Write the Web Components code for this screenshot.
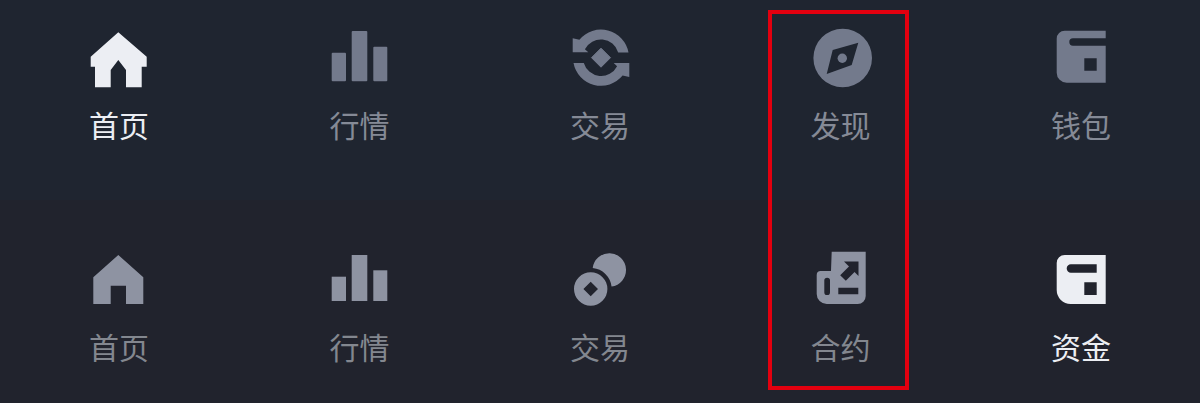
<!DOCTYPE html>
<html lang="zh">
<head>
<meta charset="utf-8">
<title>Tab bars</title>
<style>
  html, body { margin: 0; padding: 0; background: #21232d; }
</style>
</head>
<body>
<compare-sheet>
  <tab-bar variant="top">
    <tab-item active icon="home" style="--nudge:-2px">首页</tab-item>
    <tab-item icon="bars" style="--nudge:-1px">行情</tab-item>
    <tab-item icon="swap">交易</tab-item>
    <tab-item icon="compass" style="--nudge:1px">发现</tab-item>
    <tab-item icon="wallet" style="--nudge:2px">钱包</tab-item>
  </tab-bar>
  <tab-bar variant="bottom">
    <tab-item icon="home2" style="--nudge:-2px">首页</tab-item>
    <tab-item icon="bars2" style="--nudge:-1px">行情</tab-item>
    <tab-item icon="coins">交易</tab-item>
    <tab-item icon="contract" style="--nudge:1px">合约</tab-item>
    <tab-item active icon="funds" style="--nudge:2px">资金</tab-item>
  </tab-bar>
</compare-sheet>

<script>
const SWAP_ARC = 'M58.5 24.4A28 28 0 0 0 9.4 11.8L2.7 10.3V24.3H18.3L14.9 21.2A18 18 0 0 1 48.2 24.4Z';

const ICONS = {
  home: `<path d="M28.3 4.3 56.7 28.7V38.7H51.7V59.3H36V42L28.3 32 20.7 42V59.3H5V38.7H.7V28.7Z"/>`,
  bars: `<rect x="1.7" y="24.7" width="14.3" height="28.6" rx="1"/><rect x="21.7" y="3" width="15.6" height="50.3" rx="1"/><rect x="43.3" y="18.7" width="14" height="34.6" rx="1"/>`,
  swap: `<path d="${SWAP_ARC}"/>
         <path d="${SWAP_ARC}" transform="rotate(180 31 29.7)"/>
         <path d="M31 20.2 40.5 29.7 31 39.2 21.5 29.7Z" stroke="currentColor" stroke-width="1" stroke-linejoin="round"/>`,
  compass: `<path fill-rule="evenodd" d="M32.7.7A29.3 29.3 0 1 1 32.7 59.3 29.3 29.3 0 1 1 32.7.7ZM48.3 14.7 22.7 22 16.7 46 41.7 37Z"/><circle cx="32.3" cy="30.3" r="4.7"/>`,
  wallet: `<path fill-rule="evenodd" d="M14.7 2.7H55.7V10.3H23A3.7 3.7 0 0 0 23 17.7H55.7V54.7H16.7A10 10 0 0 1 6.7 44.7V10.7A8 8 0 0 1 14.7 2.7ZM34.3 30.3V42.7H46.7V30.3Z"/>`,
  home2: `<path fill-rule="evenodd" d="M28.3 5 53.3 27.3V54H36V35.7H20.7V54H3.3V27.3Z"/>`,
  bars2: `<rect x="1.7" y="26.7" width="14.3" height="24.3"/><rect x="21.7" y="5" width="15.6" height="46"/><rect x="43.3" y="20.3" width="14" height="30.7"/>`,
  coins: `<path d="M22.72 18.12A16.7 16.7 0 1 1 41.54 36.54 21 21 0 0 0 22.72 18.12Z"/>
          <path fill-rule="evenodd" d="M20.7 22.3A16.7 16.7 0 1 1 20.7 55.7 16.7 16.7 0 1 1 20.7 22.3ZM20.7 31.7 13.4 39 20.7 46.3 28 39Z"/>`,
  contract: `<path fill-rule="evenodd" d="M21.7 1.7H55.7V46A8 8 0 0 1 47.7 54H16.7A10 10 0 0 1 6.7 44V25A4 4 0 0 1 10.7 21H21ZM14.3 30.5V42.2A2.85 2.85 0 0 0 20 42.2V30.5A2.85 2.85 0 0 0 14.3 30.5ZM28.3 37.7V44.3H48.3V37.7Z"/>
             <path d="M33 28 43 18" fill="none" stroke="var(--cut)" stroke-width="8"/><path d="M34 11.5H48.5V26Z" fill="var(--cut)"/>`,
  funds: `<path fill-rule="evenodd" d="M14.7 5H55.7V54H20.7A14 14 0 0 1 6.7 40V13A8 8 0 0 1 14.7 5ZM20.9 14.3A4.2 4.2 0 0 0 20.9 22.7H46.7V14.3ZM34.3 32.3V45H46.7V32.3Z"/>`
};

class CompareSheet extends HTMLElement {
  constructor() {
    super();
    this.attachShadow({mode: 'open'}).innerHTML = `
      <style>
        :host { display: block; position: relative; width: 1200px; height: 403px; overflow: hidden; }
        .mark {
          position: absolute; left: 768px; top: 10px;
          width: 133px; height: 372px;
          border: 4px solid #e3000f;
        }
      </style>
      <slot></slot>
      <div class="mark"></div>`;
  }
}

class TabBar extends HTMLElement {
  constructor() {
    super();
    this.attachShadow({mode: 'open'}).innerHTML = `
      <style>
        :host {
          display: grid; grid-template-columns: repeat(5, 240px);
          box-sizing: border-box; height: 200px; padding-top: 28px;
          background: #1f2530;
          --icon: #737a8c; --text: #858a96; --cut: #1f2530;
        }
        :host([variant="bottom"]) {
          height: 203px; padding-top: 50px;
          background: #21232d;
          --icon: #8e93a2; --text: #83878f; --cut: #21232d;
        }
      </style>
      <slot></slot>`;
  }
}

class TabItem extends HTMLElement {
  constructor() {
    super();
    const svg = ICONS[this.getAttribute('icon')] || '';
    this.attachShadow({mode: 'open'}).innerHTML = `
      <style>
        :host {
          display: flex; flex-direction: column; align-items: center;
          color: var(--icon);
          font: 400 30px/36px "Noto Sans CJK SC", "Noto Sans", sans-serif;
        }
        :host([active]) { color: #eceef3; }
        svg { display: block; width: 60px; height: 60px; overflow: visible; fill: currentColor; }
        .label { margin: 18px 0 0 var(--nudge, 0); color: var(--text); }
        :host([active]) .label { color: #eceef3; }
      </style>
      <svg viewBox="0 0 60 60" aria-hidden="true">${svg}</svg>
      <span class="label"><slot></slot></span>`;
  }
}

customElements.define('compare-sheet', CompareSheet);
customElements.define('tab-bar', TabBar);
customElements.define('tab-item', TabItem);
</script>
</body>
</html>
